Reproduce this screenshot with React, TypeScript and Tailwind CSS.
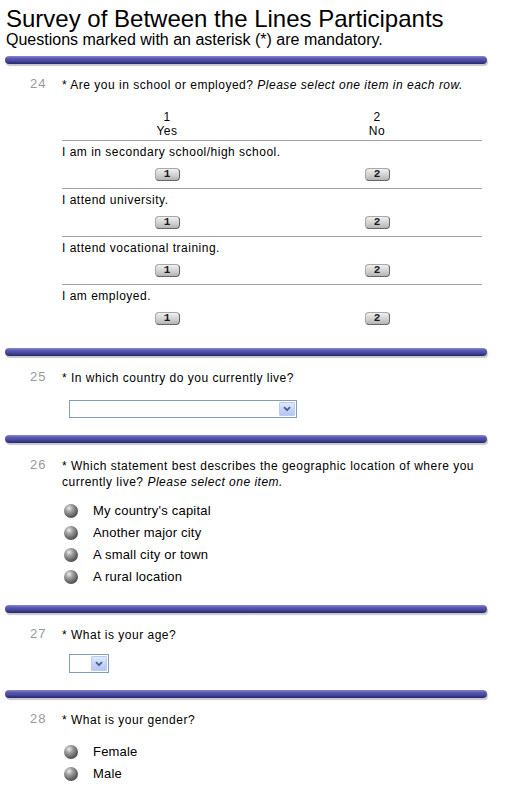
import React from "react";

function Bar({ className = "" }: { className?: string }) {
  return (
    <div
      className={`ml-[5px] w-[482px] h-[8px] rounded-full bg-[linear-gradient(to_bottom,#8a8ad0_0%,#5a5ab0_30%,#45459a_65%,#262670_100%)] shadow-[1px_2px_1px_rgba(0,0,0,0.22)] ${className}`}
    />
  );
}

function QHead({ n, children }: { n: string; children: React.ReactNode }) {
  return (
    <div className="flex">
      <div className="w-[62px] pl-[30px] text-[13px] leading-[14px] tracking-[1px] text-[#999999]">{n}</div>
      <div className="w-[420px] whitespace-nowrap text-[12px] leading-[16px] tracking-[0.5px] text-black">{children}</div>
    </div>
  );
}

function Btn({ v }: { v: string }) {
  return (
    <div className="w-[25px] h-[13px] rounded-[4px] border border-[#a8a8a8] border-r-[#666666] border-b-[#666666] bg-[linear-gradient(to_bottom,#f0f0f0,#d4d4d4_50%,#b4b4b4)] flex items-center justify-center font-['Liberation_Mono',monospace] font-bold text-[11px] leading-none text-[#1a1a1a]">
      {v}
    </div>
  );
}

function Radio({ label }: { label: string }) {
  return (
    <div className="flex items-center h-[22px]">
      <div className="ml-[2px] w-[14px] h-[14px] rounded-full bg-[radial-gradient(circle_at_36%_30%,#ececec_0%,#a0a0a0_28%,#626262_62%,#303030_100%)]" />
      <span className="ml-[15px] text-[13px] leading-[22px] tracking-[0.2px]">{label}</span>
    </div>
  );
}

function Select({ w, h, className = "" }: { w: string; h: string; className?: string }) {
  return (
    <div className={`ml-[69px] ${w} ${h} border border-[#7f9db9] bg-white flex justify-end p-[1px] ${className}`}>
      <div className="w-[16px] h-full rounded-[1px] border border-[#bccbf0] bg-[linear-gradient(to_bottom,#dfe8fe,#c6d6fb_50%,#b4c7f5)] flex items-center justify-center">
        <svg width="8" height="6" viewBox="0 0 8 6">
          <path d="M1 1.2 L4 4.2 L7 1.2" fill="none" stroke="#4d6185" strokeWidth="1.8" />
        </svg>
      </div>
    </div>
  );
}

const rows = [
  "I am in secondary school/high school.",
  "I attend university.",
  "I attend vocational training.",
  "I am employed.",
];

export default function App() {
  return (
    <div className="w-[513px] h-[790px] overflow-hidden bg-white text-black font-['Liberation_Sans',Arial,sans-serif]">
      <div className="pl-[6px] pt-[6px]">
        <h1 className="text-[24px] leading-[25px]">Survey of Between the Lines Participants</h1>
        <p className="text-[16px] leading-[17px]">Questions marked with an asterisk (*) are mandatory.</p>
      </div>

      <Bar className="mt-[8px]" />
      <section className="pt-[13px]">
        <QHead n="24">
          * Are you in school or employed? <i>Please select one item in each row.</i>
        </QHead>
        <div className="ml-[62px] w-[420px] mt-[17px]">
          <div className="flex text-[12px] leading-[14px] tracking-[0.5px] text-center pb-[2px]">
            <div className="w-[210px]">
              1<br />Yes
            </div>
            <div className="w-[210px]">
              2<br />No
            </div>
          </div>
          {rows.map((r) => (
            <div key={r} className="border-t border-[#a0a0a0] pt-[3px] pb-[7px]">
              <div className="text-[12px] leading-[16px] tracking-[0.5px]">{r}</div>
              <div className="flex mt-[8px]">
                <div className="w-[210px] flex justify-center">
                  <Btn v="1" />
                </div>
                <div className="w-[210px] flex justify-center">
                  <Btn v="2" />
                </div>
              </div>
            </div>
          ))}
        </div>
      </section>

      <Bar className="mt-[16px]" />
      <section className="pt-[14px]">
        <QHead n="25">* In which country do you currently live?</QHead>
        <Select w="w-[228px]" h="h-[18px]" className="mt-[14px]" />
      </section>

      <Bar className="mt-[17px]" />
      <section className="pt-[15px]">
        <QHead n="26">
          * Which statement best describes the geographic location of where you
          <br />
          currently live? <i>Please select one item.</i>
        </QHead>
        <div className="ml-[62px] mt-[10px]">
          <Radio label="My country's capital" />
          <Radio label="Another major city" />
          <Radio label="A small city or town" />
          <Radio label="A rural location" />
        </div>
      </section>

      <Bar className="mt-[17px]" />
      <section className="pt-[14px]">
        <QHead n="27">* What is your age?</QHead>
        <Select w="w-[40px]" h="h-[19px]" className="mt-[11px]" />
      </section>

      <Bar className="mt-[17px]" />
      <section className="pt-[14px]">
        <QHead n="28">* What is your gender?</QHead>
        <div className="ml-[62px] mt-[13px]">
          <Radio label="Female" />
          <Radio label="Male" />
        </div>
      </section>
    </div>
  );
}
